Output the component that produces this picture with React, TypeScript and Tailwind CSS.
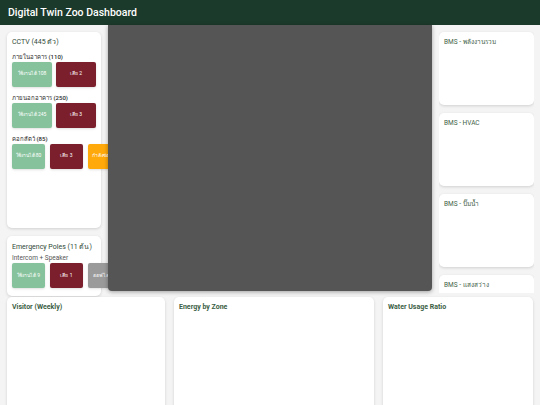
import React from 'react'

type Stat = { label: string; tone: 'ok' | 'bad' | 'fix' | 'off' }

interface Group {
  title: string
  stats: Stat[]
  wide?: boolean
}

const toneClass: Record<Stat['tone'], string> = {
  ok: 'bg-[#86c29b]',
  bad: 'bg-[#7b1f2c]',
  fix: 'bg-[#ffa90a]',
  off: 'bg-[#9a9a9a]',
}

const cctvGroups: Group[] = [
  { title: 'ภายในอาคาร (110)', wide: true, stats: [{ label: 'ใช้งานได้ 108', tone: 'ok' }, { label: 'เสีย 2', tone: 'bad' }] },
  { title: 'ภายนอกอาคาร (250)', wide: true, stats: [{ label: 'ใช้งานได้ 245', tone: 'ok' }, { label: 'เสีย 3', tone: 'bad' }] },
  {
    title: 'คอกสัตว์ (85)',
    stats: [
      { label: 'ใช้งานได้ 80', tone: 'ok' },
      { label: 'เสีย 3', tone: 'bad' },
      { label: 'กำลังซ่อม 2', tone: 'fix' },
    ],
  },
]

const poleStats: Stat[] = [
  { label: 'ใช้งานได้ 9', tone: 'ok' },
  { label: 'เสีย 1', tone: 'bad' },
  { label: 'ออฟไลน์ 1', tone: 'off' },
]

const bmsPanels = ['BMS - พลังงานรวม', 'BMS - HVAC', 'BMS - ปั๊มน้ำ', 'BMS - แสงสว่าง']

const StatBox = ({ stat, wide }: { stat: Stat; wide?: boolean }) => (
  <div
    className={`${toneClass[stat.tone]} ${wide ? 'w-[40px]' : 'w-[33px]'} h-[25px] shrink-0 rounded-[2px] flex items-center justify-center text-white text-[5px] whitespace-nowrap overflow-hidden shadow-sm`}
  >
    {stat.label}
  </div>
)

const Card = ({ className = '', children }: { className?: string; children?: React.ReactNode }) => (
  <div className={`bg-white rounded-[5px] shadow-[0_1px_3px_rgba(0,0,0,0.15)] ${className}`}>{children}</div>
)

export default function App() {
  return (
    <div className="w-[540px] h-[405px] overflow-hidden bg-[#f4f4f4] font-['Roboto','Noto_Sans',sans-serif]">
      {/* Top bar */}
      <header className="h-[25px] bg-[#1c3a2b] flex items-center pl-[8px]">
        <span className="text-white text-[10.5px] font-medium">Digital Twin Zoo Dashboard</span>
      </header>

      {/* Main row: sidebars + map */}
      <div className="h-[272px] grid grid-cols-[94px_324px_95px] gap-x-[7px] px-[7px]">
        {/* Left column, buttons may run under the map */}
        <div className="relative z-0 flex flex-col gap-[8px] pt-[7px]">
          <Card className="h-[196px] shrink-0 px-[5px] pt-[5px]">
            <div className="text-[7px] text-[#2f4a37] mb-[4px]">CCTV (445 ตัว)</div>
            {cctvGroups.map((g) => (
              <div key={g.title} className="mb-[6px]">
                <div className="text-[6px] font-medium text-[#2a2a2a] mb-[1px]">{g.title}</div>
                <div className={`flex ${g.wide ? 'gap-[4px]' : 'gap-[5px]'}`}>
                  {g.stats.map((s) => (
                    <StatBox key={s.label} stat={s} wide={g.wide} />
                  ))}
                </div>
              </div>
            ))}
          </Card>
          <Card className="h-[60px] shrink-0 px-[5px] pt-[5px]">
            <div className="text-[7px] text-[#2f4a37] leading-[12px]">Emergency Poles (11 ต้น)</div>
            <div className="text-[6.5px] text-[#555] leading-[9px] mt-[1px]">Intercom + Speaker</div>
            <div className="flex gap-[5px]">
              {poleStats.map((s) => (
                <StatBox key={s.label} stat={s} />
              ))}
            </div>
          </Card>
        </div>

        {/* Map area */}
        <div className="relative z-10 h-[266px] bg-[#555555] rounded-b-[4px] shadow-[0_1px_4px_rgba(0,0,0,0.35)]" />

        {/* Right column */}
        <div className="flex flex-col gap-[8px] pt-[7px] h-[268px] overflow-hidden">
          {bmsPanels.map((t) => (
            <Card key={t} className="h-[73px] shrink-0 px-[5px] pt-[6px]">
              <div className="text-[6.5px] text-[#3f5f48]">{t}</div>
            </Card>
          ))}
        </div>
      </div>

      {/* Bottom charts */}
      <div className="relative z-20 grid grid-cols-[158px_200px_150px] gap-x-[9px] px-[7px]">
        {['Visitor (Weekly)', 'Energy by Zone', 'Water Usage Ratio'].map((t) => (
          <Card key={t} className="h-[120px] px-[5px] pt-[5px]">
            <div className="text-[7px] font-bold text-[#3b5e45]">{t}</div>
          </Card>
        ))}
      </div>
    </div>
  )
}
